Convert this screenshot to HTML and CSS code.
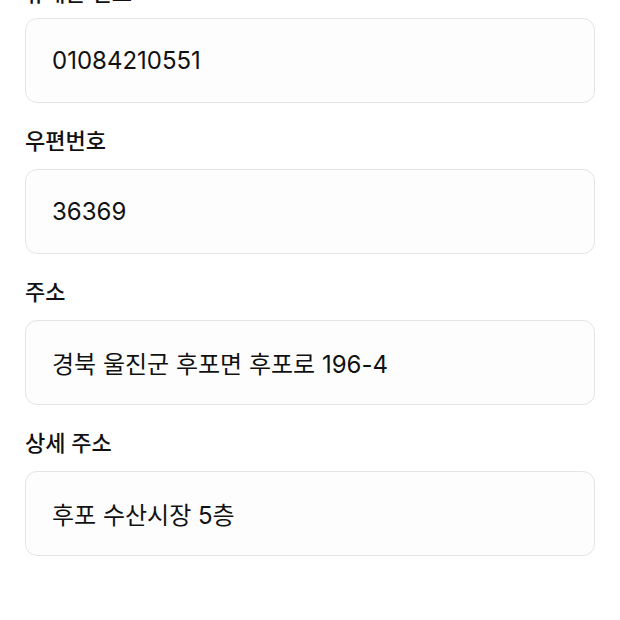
FILE: index.html
```html
<!DOCTYPE html>
<html lang="ko">
<head>
    <meta charset="UTF-8">
    <meta name="viewport" content="width=device-width, initial-scale=1.0">
    <title>배송지 정보</title>
    <link rel="stylesheet" href="styles.css">
</head>
<body>

<form id="addressForm">
    <div class="field">
        <label for="phone">휴대폰 번호</label>
        <input id="phone" name="phone" type="text" value="01084210551">
    </div>
    <div class="field">
        <label for="zip">우편번호</label>
        <input id="zip" name="zip" type="text" value="36369">
    </div>
    <div class="field">
        <label for="address">주소</label>
        <input id="address" name="address" type="text" value="경북 울진군 후포면 후포로 196-4">
    </div>
    <div class="field">
        <label for="detail">상세 주소</label>
        <input id="detail" name="detail" type="text" value="후포 수산시장 5층">
    </div>
</form>

</body>
</html>
```

FILE: styles.css
```css
body {
    font-family: Inter, "Noto Sans CJK KR", sans-serif;
    background-color: #fff;
    color: #111;
    margin: 0;
}
#addressForm {
    display: flex;
    flex-direction: column;
    gap: 24px;
    padding: 0 25px;
    margin-top: -21px;
}
.field {
    display: flex;
    flex-direction: column;
}
.field label {
    font-size: 22px;
    line-height: 28px;
    font-weight: 500;
    margin-bottom: 14px;
}
.field:first-child label {
    margin-bottom: 11px;
}
.field input {
    height: 85px;
    box-sizing: border-box;
    padding: 0 26px;
    border: 1px solid #e4e4e4;
    border-radius: 12px;
    background: #fdfdfd;
    font-family: inherit;
    font-size: 24px;
    color: #111;
    outline: none;
}
```
